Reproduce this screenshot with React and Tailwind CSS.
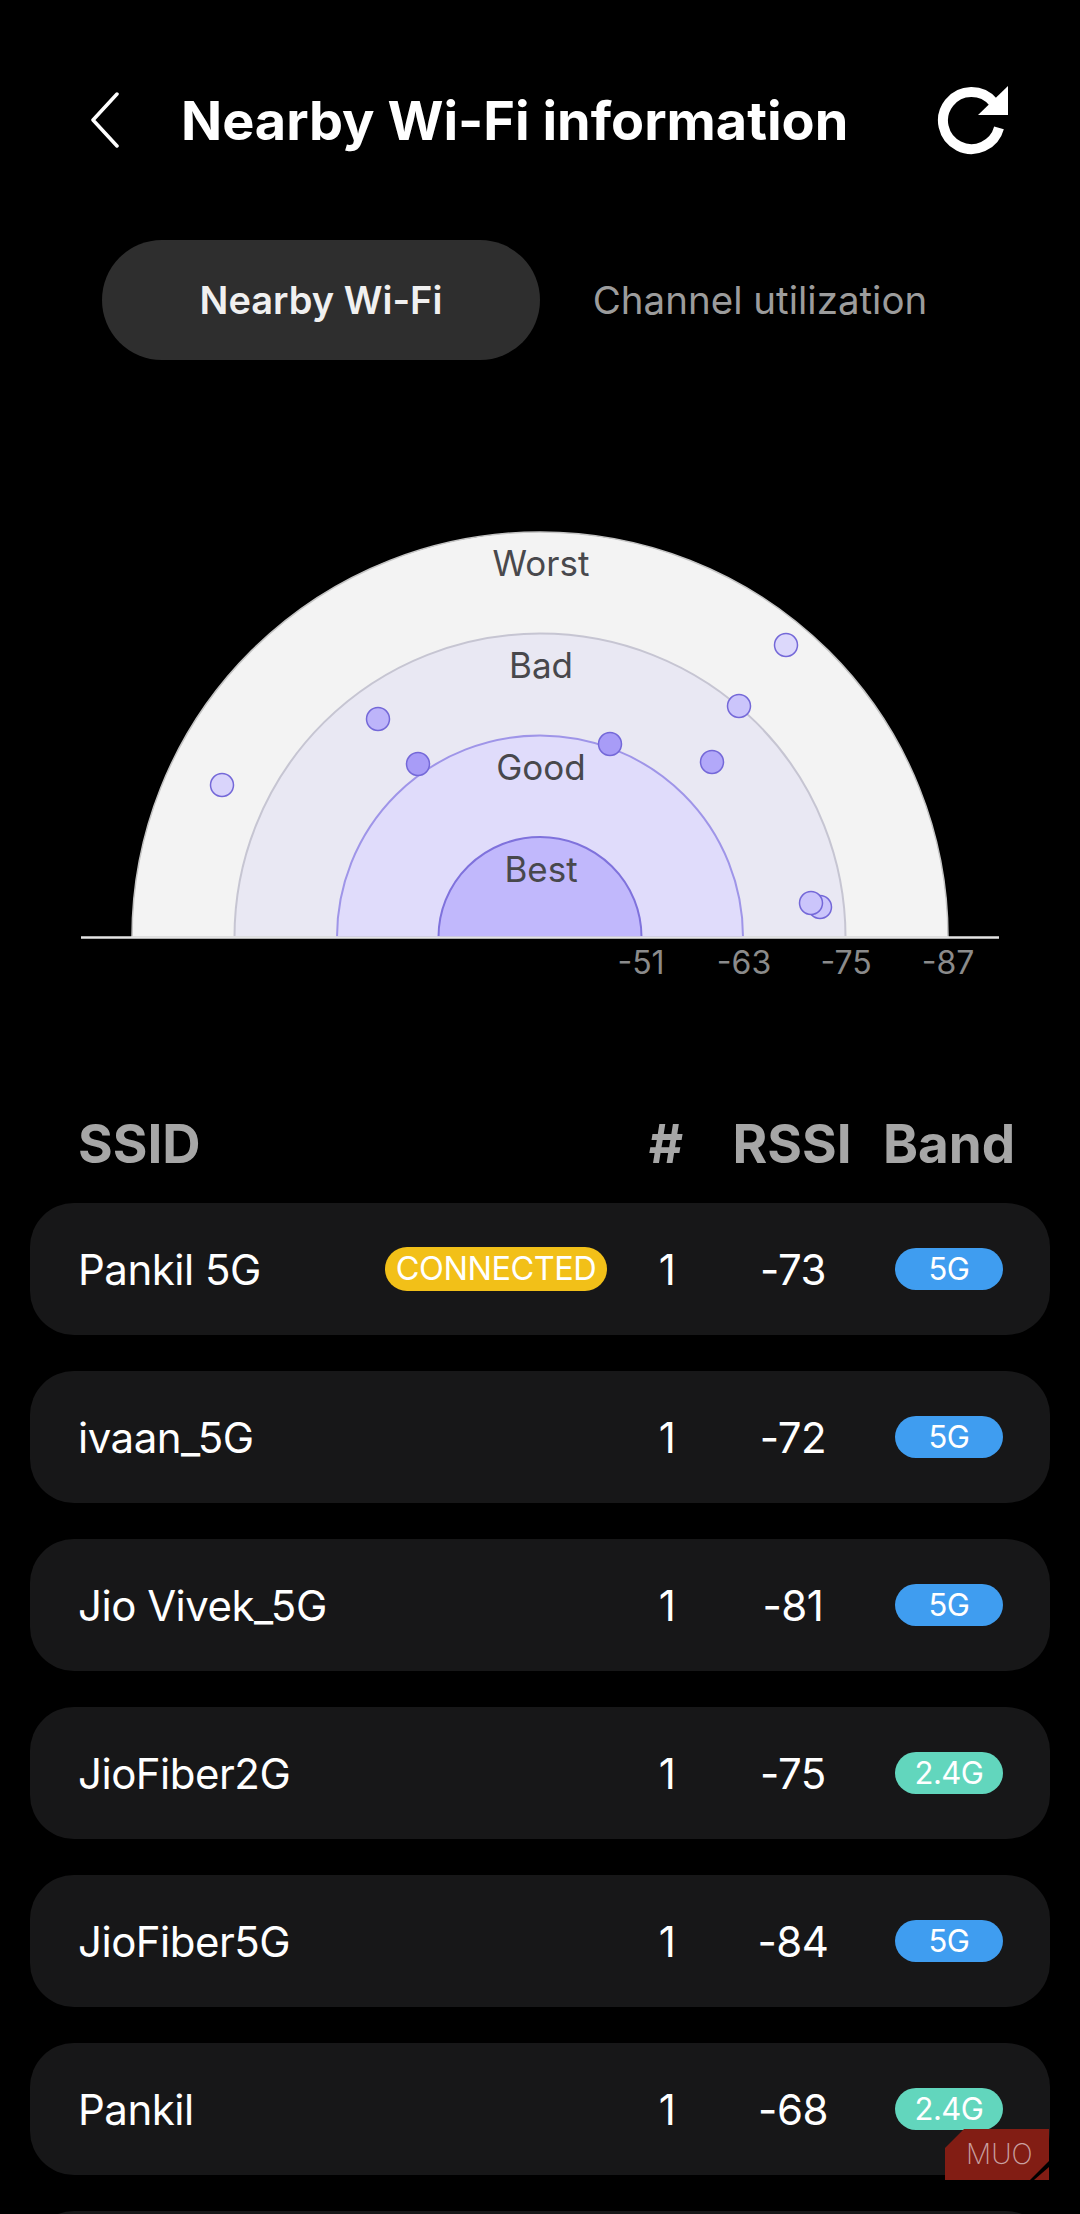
const rows = [
  { ssid: "Pankil 5G", ch: 1, rssi: -73, band: "5G", connected: true },
  { ssid: "ivaan_5G", ch: 1, rssi: -72, band: "5G" },
  { ssid: "Jio Vivek_5G", ch: 1, rssi: -81, band: "5G" },
  { ssid: "JioFiber2G", ch: 1, rssi: -75, band: "2.4G" },
  { ssid: "JioFiber5G", ch: 1, rssi: -84, band: "5G" },
  { ssid: "Pankil", ch: 1, rssi: -68, band: "2.4G" },
];

const dots = [
  [222, 785, "#d9d4fb"],
  [378, 719, "#bdb4fa"],
  [418, 764, "#a89cf7"],
  [610, 744, "#a89cf7"],
  [712, 762, "#b2a8f9"],
  [739, 706, "#cbc5fb"],
  [786, 645, "#dcd8fb"],
  [820, 907, "#cbc5fb"],
  [811, 903, "#cbc5fb"],
];

function Chart() {
  return (
    <svg width="1080" height="520" viewBox="0 480 1080 520" className="block mt-[120px]">
      <path d="M132 937A408 405 0 0 1 948 937Z" fill="#f3f3f3" stroke="#c4c4c4" strokeWidth="1.5" />
      <path d="M234.5 937A305.5 303.5 0 0 1 845.5 937Z" fill="#e9e8f3" stroke="#c6c5d2" strokeWidth="2" />
      <path d="M337 937A203 201.5 0 0 1 743 937Z" fill="#e0dcfb" stroke="#9f95e8" strokeWidth="2" />
      <path d="M438.5 937A101.5 100 0 0 1 641.5 937Z" fill="#c1b8fc" stroke="#7f72dc" strokeWidth="2" />
      <line x1="81" y1="937.5" x2="999" y2="937.5" stroke="#e4e4e4" strokeWidth="2.5" />
      {dots.map(([x, y, c], i) => (
        <circle key={i} cx={x} cy={y} r="11.5" fill={c} stroke="#7468d8" strokeWidth="1.5" />
      ))}
      <g fontFamily="Inter, sans-serif" fontSize="35" fill="#48484c" textAnchor="middle">
        <text x="541" y="576">Worst</text>
        <text x="541" y="678">Bad</text>
        <text x="541" y="780">Good</text>
        <text x="541" y="882">Best</text>
      </g>
      <g fontFamily="Inter, sans-serif" fontSize="32" fill="#8b8b8b" textAnchor="middle">
        <text x="641" y="974">-51</text>
        <text x="744" y="974">-63</text>
        <text x="846" y="974">-75</text>
        <text x="948" y="974">-87</text>
      </g>
    </svg>
  );
}

function Row({ row }) {
  return (
    <div className="grid grid-cols-[1fr_120px_132px_144px] items-center h-[132px] pl-[48px] pr-[47px] rounded-[44px] bg-[#171718] text-white text-[42px] tracking-[-0.5px]">
      <div className="flex items-center justify-between">
        <span>{row.ssid}</span>
        {row.connected && (
          <span className="flex items-center justify-center w-[222px] h-[44px] rounded-full bg-[#f2c018] text-[32.5px]">
            CONNECTED
          </span>
        )}
      </div>
      <span className="text-center">{row.ch}</span>
      <span className="text-center">{row.rssi}</span>
      <span className={`flex items-center justify-center ml-[36px] w-[108px] h-[42px] rounded-full text-[31px] ${row.band === "5G" ? "bg-[#3f9df0]" : "bg-[#62d6bd]"}`}>
        {row.band}
      </span>
    </div>
  );
}

export default function App() {
  return (
    <div className="relative w-[1080px] h-[2214px] overflow-hidden bg-black font-['Inter',sans-serif]">
      <div className="flex items-center h-[90px] mt-[75px] pl-[91px] pr-[71px]">
        <svg width="28" height="56" viewBox="0 0 28 56" fill="none" stroke="#fff" strokeWidth="3.5" strokeLinecap="round" strokeLinejoin="round">
          <path d="M26 2L2 28L26 54" />
        </svg>
        <h1 className="ml-[62px] flex-1 text-white text-[54px] font-bold">Nearby Wi-Fi information</h1>
        <svg width="72" height="72" viewBox="0 0 72 72" fill="none" className="mt-[2px]">
          <path d="M56.3 17.2A28.5 28.5 0 1 0 62 42.9" stroke="#fff" strokeWidth="10" />
          <path d="M71 1V30H41Z" fill="#fff" />
        </svg>
      </div>

      <div className="flex items-center mt-[75px] ml-[102px]">
        <div className="flex items-center justify-center w-[438px] h-[120px] rounded-full bg-[#2e2e2e] text-[#f0f0f0] text-[38px] font-semibold">
          Nearby Wi-Fi
        </div>
        <div className="w-[440px] pt-[2px] text-center text-[#9c9c9c] text-[38.5px]">Channel utilization</div>
      </div>

      <Chart />

      <div className="grid grid-cols-[1fr_120px_132px_144px] items-center h-[60px] mt-[105px] pl-[78px] pr-[78px] text-[#a6a6a6] text-[53px] font-bold">
        <span>SSID</span>
        <span className="text-center">#</span>
        <span className="text-center whitespace-nowrap">RSSI</span>
        <span className="flex justify-center ml-[37px] w-[108px] whitespace-nowrap">Band</span>
      </div>

      <div className="flex flex-col gap-9 mx-[30px] mt-[38px]">
        {rows.map((r) => (
          <Row key={r.ssid} row={r} />
        ))}
        <div className="h-[132px] rounded-[44px] bg-[#171718]" />
      </div>

      <div className="absolute left-[945px] top-[2129px] w-[104px] h-[51px]">
        <svg width="104" height="51" viewBox="0 0 104 51" className="absolute inset-0">
          <path d="M19 0H104V32L85 51H0V19Z" fill="#821d14" />
          <path d="M104 38V51H89Z" fill="#821d14" />
        </svg>
        <span className="absolute left-[21px] top-[9px] text-[#c9a0a0] text-[28px] leading-[32px] font-extralight">MUO</span>
      </div>
    </div>
  );
}
